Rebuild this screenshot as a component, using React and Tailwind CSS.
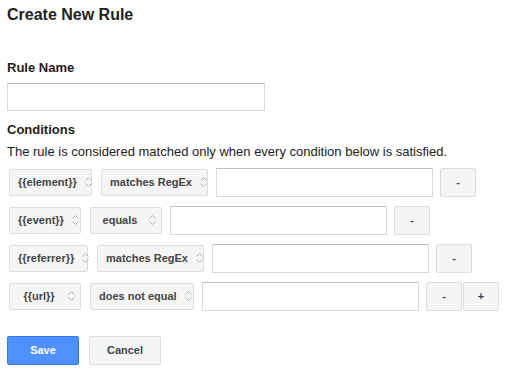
import React from 'react';

const rows = [
  { field: '{{element}}', fieldW: 'w-[83px]', op: 'matches RegEx', opW: 'w-[107px]', plus: false },
  { field: '{{event}}', fieldW: 'w-[72px]', op: 'equals', opW: 'w-[72px]', plus: false },
  { field: '{{referrer}}', fieldW: 'w-[79px]', op: 'matches RegEx', opW: 'w-[107px]', plus: false },
  { field: '{{url}}', fieldW: 'w-[72px]', op: 'does not equal', opW: 'w-[104px]', plus: true },
];

function Chevrons() {
  return (
    <svg width="7" height="12" viewBox="0 0 7 12" className="shrink-0">
      <path d="M0.5 4.5 L3.5 1.5 L6.5 4.5" fill="none" stroke="#b0b0b0" strokeWidth="1" />
      <path d="M0.5 7.5 L3.5 10.5 L6.5 7.5" fill="none" stroke="#b0b0b0" strokeWidth="1" />
    </svg>
  );
}

function Select({ label, width }) {
  return (
    <div className={`${width} h-[27px] flex items-center pl-2 pr-[5px] gap-2 bg-[#f5f5f5] border border-[#dcdcdc] rounded-[2px] text-[11px] font-bold text-[#444] cursor-default`}>
      <span className="flex-1 text-center whitespace-nowrap">{label}</span>
      <Chevrons />
    </div>
  );
}

function SmallButton({ children, className = '' }) {
  return (
    <button className={`w-[36px] h-[29px] flex items-center justify-center bg-[#f5f5f5] border border-[#dcdcdc] rounded-[2px] text-[11px] font-bold text-[#444] ${className}`}>
      {children}
    </button>
  );
}

function App() {
  return (
    <div className="min-h-screen w-full bg-white pl-[7px] pt-[6px] text-[#222]" style={{ fontFamily: '"Liberation Sans", Arial, sans-serif' }}>
      <h1 className="text-[16px] leading-[18px] font-bold">Create New Rule</h1>

      {/* Rule name */}
      <div className="mt-[36px] text-[13px] leading-[15px] font-bold">Rule Name</div>
      <input className="mt-[8px] block w-[258px] h-[28px] border border-[#d9d9d9] border-t-[#c0c0c0] bg-white outline-none" />

      {/* Conditions */}
      <div className="mt-[11px] text-[13px] leading-[15px] font-bold">Conditions</div>
      <p className="mt-[7px] text-[13px] leading-[15px]">
        The rule is considered matched only when every condition below is satisfied.
      </p>

      <div className="mt-[9px] flex flex-col gap-[10px]">
        {rows.map((r, i) => (
          <div key={i} className="flex items-center h-[28px]">
            <div className="ml-[2px]">
              <Select label={r.field} width={r.fieldW} />
            </div>
            <div className="ml-[9px]">
              <Select label={r.op} width={r.opW} />
            </div>
            <input className="ml-[8px] w-[217px] h-[29px] border border-[#d9d9d9] border-t-[#c0c0c0] bg-white outline-none" />
            <SmallButton className="ml-[7px]">-</SmallButton>
            {r.plus && <SmallButton className="ml-px text-[#223a7a]">+</SmallButton>}
          </div>
        ))}
      </div>

      {/* Actions */}
      <div className="mt-[26px] flex gap-[10px]">
        <button className="w-[72px] h-[29px] bg-[#4d90fe] border border-[#3079ed] rounded-[2px] text-white text-[11px] font-bold">
          Save
        </button>
        <button className="w-[72px] h-[29px] bg-[#f5f5f5] border border-[#dcdcdc] rounded-[2px] text-[#444] text-[11px] font-bold">
          Cancel
        </button>
      </div>
    </div>
  );
}

export default App;
